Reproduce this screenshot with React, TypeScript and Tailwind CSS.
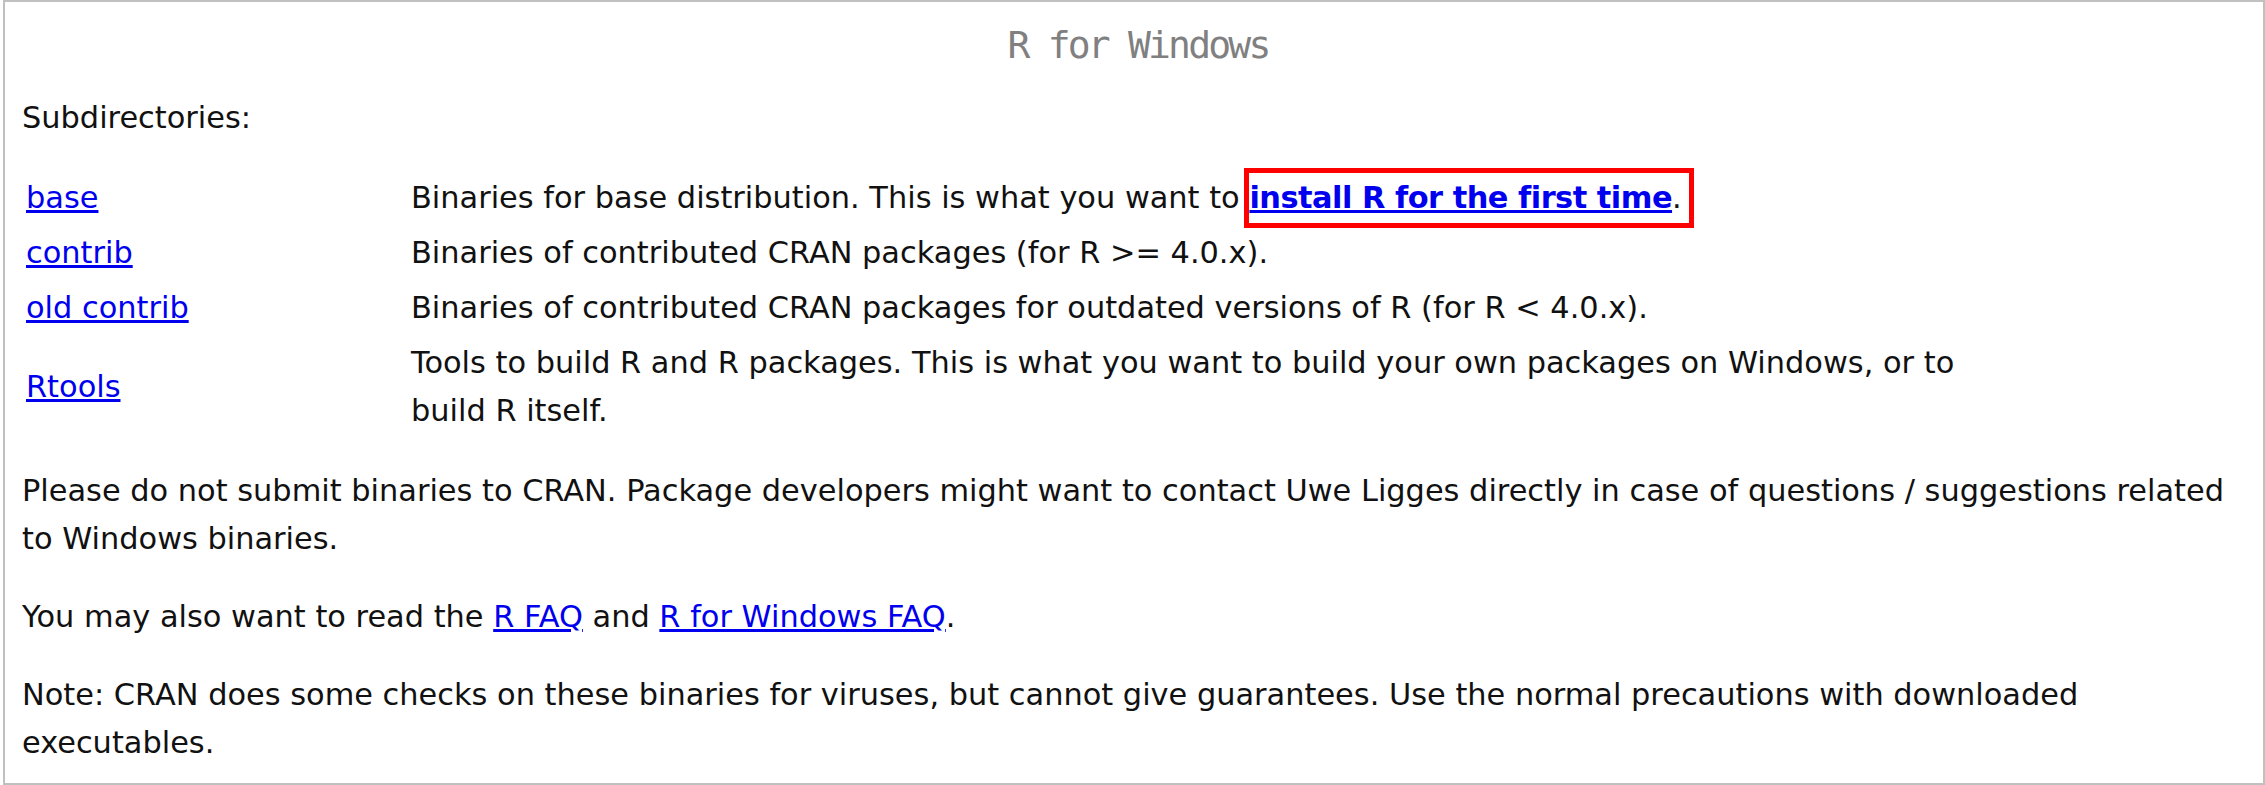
import React from "react";

const body = "font-['DejaVu_Sans',sans-serif] text-[30.4px] leading-[48px] text-[#111111]";
const link = "text-[#0000ee] underline";

export default function App() {
  return (
    <div className="w-[2265px] h-[785px] bg-white pl-[3px] overflow-hidden">
      <div className={`h-full border-2 border-[#c0c0c0] bg-white pl-[17px] pr-[17px] ${body}`}>
        <h1 className="mt-[19px] pl-[8px] text-center font-['DejaVu_Sans_Mono',monospace] text-[38px] leading-[48px] tracking-[-2.8px] text-[#808080] font-normal">
          R for Windows
        </h1>
        <p className="mt-[25px]">Subdirectories:</p>
        <table className="mt-[27px] border-separate border-spacing-x-[2px] border-spacing-y-[3px]">
          <tbody>
            <tr>
              <td className="w-[383px] px-[2px] py-[2px] align-middle">
                <a className={link}>base</a>
              </td>
              <td className="px-[2px] py-[2px] align-middle whitespace-nowrap">
                Binaries for base distribution. This is what you want to{" "}
                <span className="relative">
                  <a className={`${link} font-bold tracking-[-0.5px]`}>install R for the first time</a>.
                  <span className="absolute left-[-5px] right-[-12px] top-[-12px] bottom-[-13px] border-[5px] border-[#ff0000]"></span>
                </span>
              </td>
            </tr>
            <tr>
              <td className="px-[2px] py-[2px] align-middle">
                <a className={link}>contrib</a>
              </td>
              <td className="px-[2px] py-[2px] align-middle whitespace-nowrap">
                Binaries of contributed CRAN packages (for R &gt;= 4.0.x).
              </td>
            </tr>
            <tr>
              <td className="px-[2px] py-[2px] align-middle">
                <a className={link}>old contrib</a>
              </td>
              <td className="px-[2px] py-[2px] align-middle whitespace-nowrap">
                Binaries of contributed CRAN packages for outdated versions of R (for R &lt; 4.0.x).
              </td>
            </tr>
            <tr>
              <td className="px-[2px] py-[2px] align-middle">
                <a className={link}>Rtools</a>
              </td>
              <td className="px-[2px] py-[2px] align-middle whitespace-nowrap">
                Tools to build R and R packages. This is what you want to build your own packages on Windows, or to
                <br />
                build R itself.
              </td>
            </tr>
          </tbody>
        </table>
        <p className="mt-[27px] whitespace-nowrap">
          Please do not submit binaries to CRAN. Package developers might want to contact Uwe Ligges directly in case of questions / suggestions related
          <br />
          to Windows binaries.
        </p>
        <p className="mt-[30px] whitespace-nowrap">
          You may also want to read the <a className={link}>R FAQ</a> and{" "}
          <a className={link}>R for Windows FAQ</a>.
        </p>
        <p className="mt-[30px] whitespace-nowrap">
          Note: CRAN does some checks on these binaries for viruses, but cannot give guarantees. Use the normal precautions with downloaded
          <br />
          executables.
        </p>
      </div>
    </div>
  );
}
